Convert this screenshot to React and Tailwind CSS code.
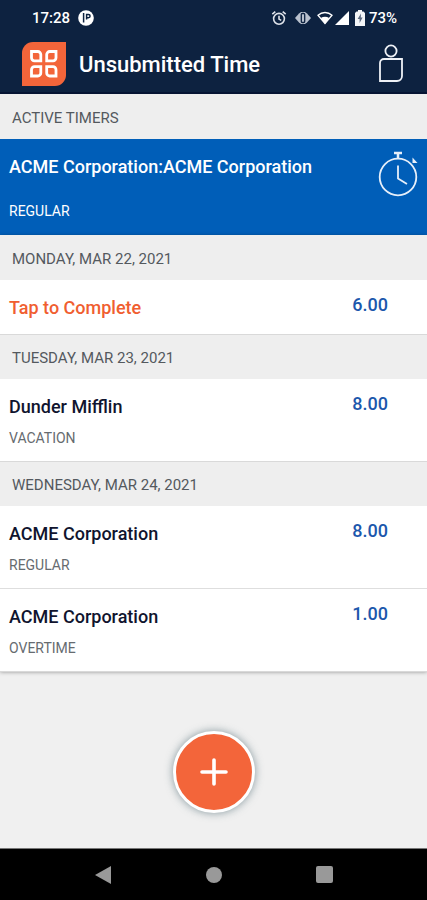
const timers = [{ id: 1, name: "ACME Corporation:ACME Corporation", type: "REGULAR" }];

const days = [
  {
    date: "MONDAY, MAR 22, 2021",
    entries: [{ id: 1, name: "Tap to Complete", hours: "6.00", incomplete: true }],
  },
  {
    date: "TUESDAY, MAR 23, 2021",
    entries: [{ id: 2, name: "Dunder Mifflin", type: "VACATION", hours: "8.00" }],
  },
  {
    date: "WEDNESDAY, MAR 24, 2021",
    entries: [
      { id: 3, name: "ACME Corporation", type: "REGULAR", hours: "8.00" },
      { id: 4, name: "ACME Corporation", type: "OVERTIME", hours: "1.00" },
    ],
  },
];

function StatusBar() {
  return (
    <div className="h-9 pl-8 pr-[30px] flex items-center justify-between text-[15px] font-medium">
      <div className="flex items-center gap-2">
        <span>17:28</span>
        <svg className="w-4 h-4" viewBox="0 0 16 16">
          <circle cx="8" cy="8" r="7.8" fill="#fff" />
          <path d="M5.6 3v9.5M8.6 9.5V4.4h1.8a1.7 1.7 0 0 1 0 3.4H8.6" fill="none" stroke="#0d2240" strokeWidth="1.5" />
        </svg>
      </div>
      <div className="flex items-center">
        {/* Alarm */}
        <svg className="w-4 h-4 mr-2" viewBox="0 0 16 16" fill="none" stroke="#dfe3ea" strokeWidth="1.6">
          <circle cx="8" cy="8.8" r="5.4" />
          <path d="M8 5.8v3.3l2.2 1.3M1.3 4.2l3-2.6M14.7 4.2l-3-2.6" />
        </svg>
        {/* Vibrate */}
        <svg className="w-4 h-4 mr-1.5" viewBox="0 0 16 16">
          <path d="M0 8l4-4.5L6 2h4l2 1.5L16 8l-4 4.5-2 1.500H6l-2-1.5z" fill="#b9c1ce" />
          <rect x="6.3" y="3.5" width="3.4" height="9" rx="1" fill="#b9c1ce" stroke="#0d2240" strokeWidth="1.3" />
        </svg>
        {/* Wi-Fi */}
        <svg className="w-4 h-4 mr-0.5" viewBox="0 0 16 16">
          <path d="M1 5.2C5 1.6 11 1.6 15 5.2L8 13.6z" fill="none" stroke="#fff" strokeWidth="1.3" />
          <path d="M3.8 8c2.6-1.8 5.8-1.8 8.4 0L8 14z" fill="#fff" />
        </svg>
        {/* Signal */}
        <svg className="w-3.5 h-3.5 mr-1.5" viewBox="0 0 14 14">
          <path d="M14 0v14H0z" fill="#fff" />
        </svg>
        {/* Battery */}
        <svg className="w-2.5 h-4 mr-1" viewBox="0 0 10 16">
          <path d="M3 0h4v1.6h1.5L10 3v13H0V3l1.5-1.4H3z" fill="#f3f5f8" />
          <path d="M6 3.5L2.6 9h2v4l3-5.4H5.8z" fill="#5c6a80" />
        </svg>
        <span>73%</span>
      </div>
    </div>
  );
}

function Logo() {
  return (
    <svg className="w-11 h-11 shrink-0" viewBox="0 0 44 44">
      <path d="M11 0h33v33a11 11 0 0 1-11 11H0V11A11 11 0 0 1 11 0z" fill="#f3653a" />
      <g fill="none" stroke="#fff" strokeWidth="2.8">
        <path d="M9.5 9.5h6.3a3 3 0 0 1 3 3v6.3h-6.300a3 3 0 0 1-3-3z" />
        <path d="M34 9.5h-6.3a3 3 0 0 0-3 3v6.3h6.3a3 3 0 0 0 3-3z" />
        <path d="M9.5 34h6.3a3 3 0 0 0 3-3v-6.3h-6.3a3 3 0 0 0-3 3z" />
        <path d="M34 34h-6.3a3 3 0 0 1-3-3v-6.3h6.3a3 3 0 0 1 3 3z" />
      </g>
    </svg>
  );
}

function ProfileIcon() {
  return (
    <svg className="w-6 h-[38px]" viewBox="0 0 24 38" fill="none" stroke="#eef1f6" strokeWidth="1.8">
      <circle cx="12" cy="7" r="5.6" />
      <path d="M5 15h18v17a5 5 0 0 1-5 5H1V19a4 4 0 0 1 4-4z" />
    </svg>
  );
}

function StopwatchIcon() {
  return (
    <svg className="w-10 h-[46px] shrink-0" viewBox="0 0 40 46" fill="none" stroke="#e6effa" strokeWidth="1.8">
      <circle cx="20" cy="26" r="18.3" />
      <path d="M20 14.5v13l9 5.5" />
      <path d="M16 2h8M20 2v5.5" strokeWidth="2.5" />
      <path d="M34.5 6.5l5 5.5h-5z" fill="#e6effa" stroke="none" />
    </svg>
  );
}

function SectionHeading({ children }) {
  return (
    <h2 className="h-[45px] px-3 pt-[3px] flex items-center bg-[#eeeeee] text-[15px] text-[#54595e]">
      {children}
    </h2>
  );
}

function Entry({ name, type, hours, incomplete }) {
  return (
    <li>
      <button className="w-full pl-[9px] pr-[39px] pt-4 pb-3.5 flex items-start justify-between text-left">
        <span>
          <span
            className={`block text-lg leading-6 font-medium ${incomplete ? "text-[#f05e30]" : "text-[#10142e]"}`}
          >
            {name}
          </span>
          {type && <span className="block mt-2.5 text-sm leading-[18px] text-[#666b70]">{type}</span>}
        </span>
        <span className="text-lg leading-[18px] font-medium text-[#1c57ac]">{hours}</span>
      </button>
    </li>
  );
}

export default function App() {
  return (
    <div className="min-h-screen flex flex-col bg-[#f0f0f0] font-[Roboto,sans-serif]">
      <header className="bg-[#0d2240] text-white border-b-2 border-[#061433]">
        <StatusBar />
        <div className="h-14 pl-[22px] pr-6 flex items-center justify-between">
          <div className="flex items-center gap-[13px]">
            <Logo />
            <h1 className="pt-0.5 text-[22px] leading-8 font-medium">Unsubmitted Time</h1>
          </div>
          <button aria-label="Profile" className="pb-0.5">
            <ProfileIcon />
          </button>
        </div>
      </header>

      <main className="grow flex flex-col">
        <section>
          <SectionHeading>ACTIVE TIMERS</SectionHeading>
          {timers.map((timer) => (
            <button
              key={timer.id}
              className="w-full h-24 px-[9px] pt-3 flex items-start justify-between text-left bg-[#005eb8] text-white"
            >
              <span className="pt-1">
                <span className="block text-lg leading-6 font-medium">{timer.name}</span>
                <span className="block mt-[23px] text-sm leading-[18px]">{timer.type}</span>
              </span>
              <StopwatchIcon />
            </button>
          ))}
        </section>

        <div className="shadow-[0_1px_4px_rgba(0,0,0,0.4)]">
          {days.map((day) => (
            <section key={day.date}>
              <SectionHeading>{day.date}</SectionHeading>
              <ul className="bg-white border-b border-[#d9d9d9] -mb-px relative divide-y divide-[#dedede]">
                {day.entries.map((entry) => (
                  <Entry key={entry.id} {...entry} />
                ))}
              </ul>
            </section>
          ))}
        </div>

        <div className="grow flex items-center justify-center pt-6">
          <button
            aria-label="Add time"
            className="w-[82px] h-[82px] rounded-full bg-[#f3653a] border-[3px] border-white flex items-center justify-center shadow-[0_0_8px_rgba(60,90,100,0.6)]"
          >
            <svg className="w-7 h-7" viewBox="0 0 28 28" stroke="#fff" strokeWidth="3.6" strokeLinecap="round">
              <path d="M14 2v24M2 14h24" />
            </svg>
          </button>
        </div>
      </main>

      <nav className="h-[52px] bg-black border-t border-[#777777] flex justify-between items-center px-[94px]">
        <button aria-label="Back">
          <svg className="w-[18px] h-[18px]" viewBox="0 0 18 18">
            <path d="M17 0v18L1 9z" fill="#999" />
          </svg>
        </button>
        <button aria-label="Home" className="w-4 h-4 rounded-full bg-[#999999]" />
        <button aria-label="Recent apps" className="w-[17px] h-[17px] rounded-xs bg-[#999999]" />
      </nav>
    </div>
  );
}
